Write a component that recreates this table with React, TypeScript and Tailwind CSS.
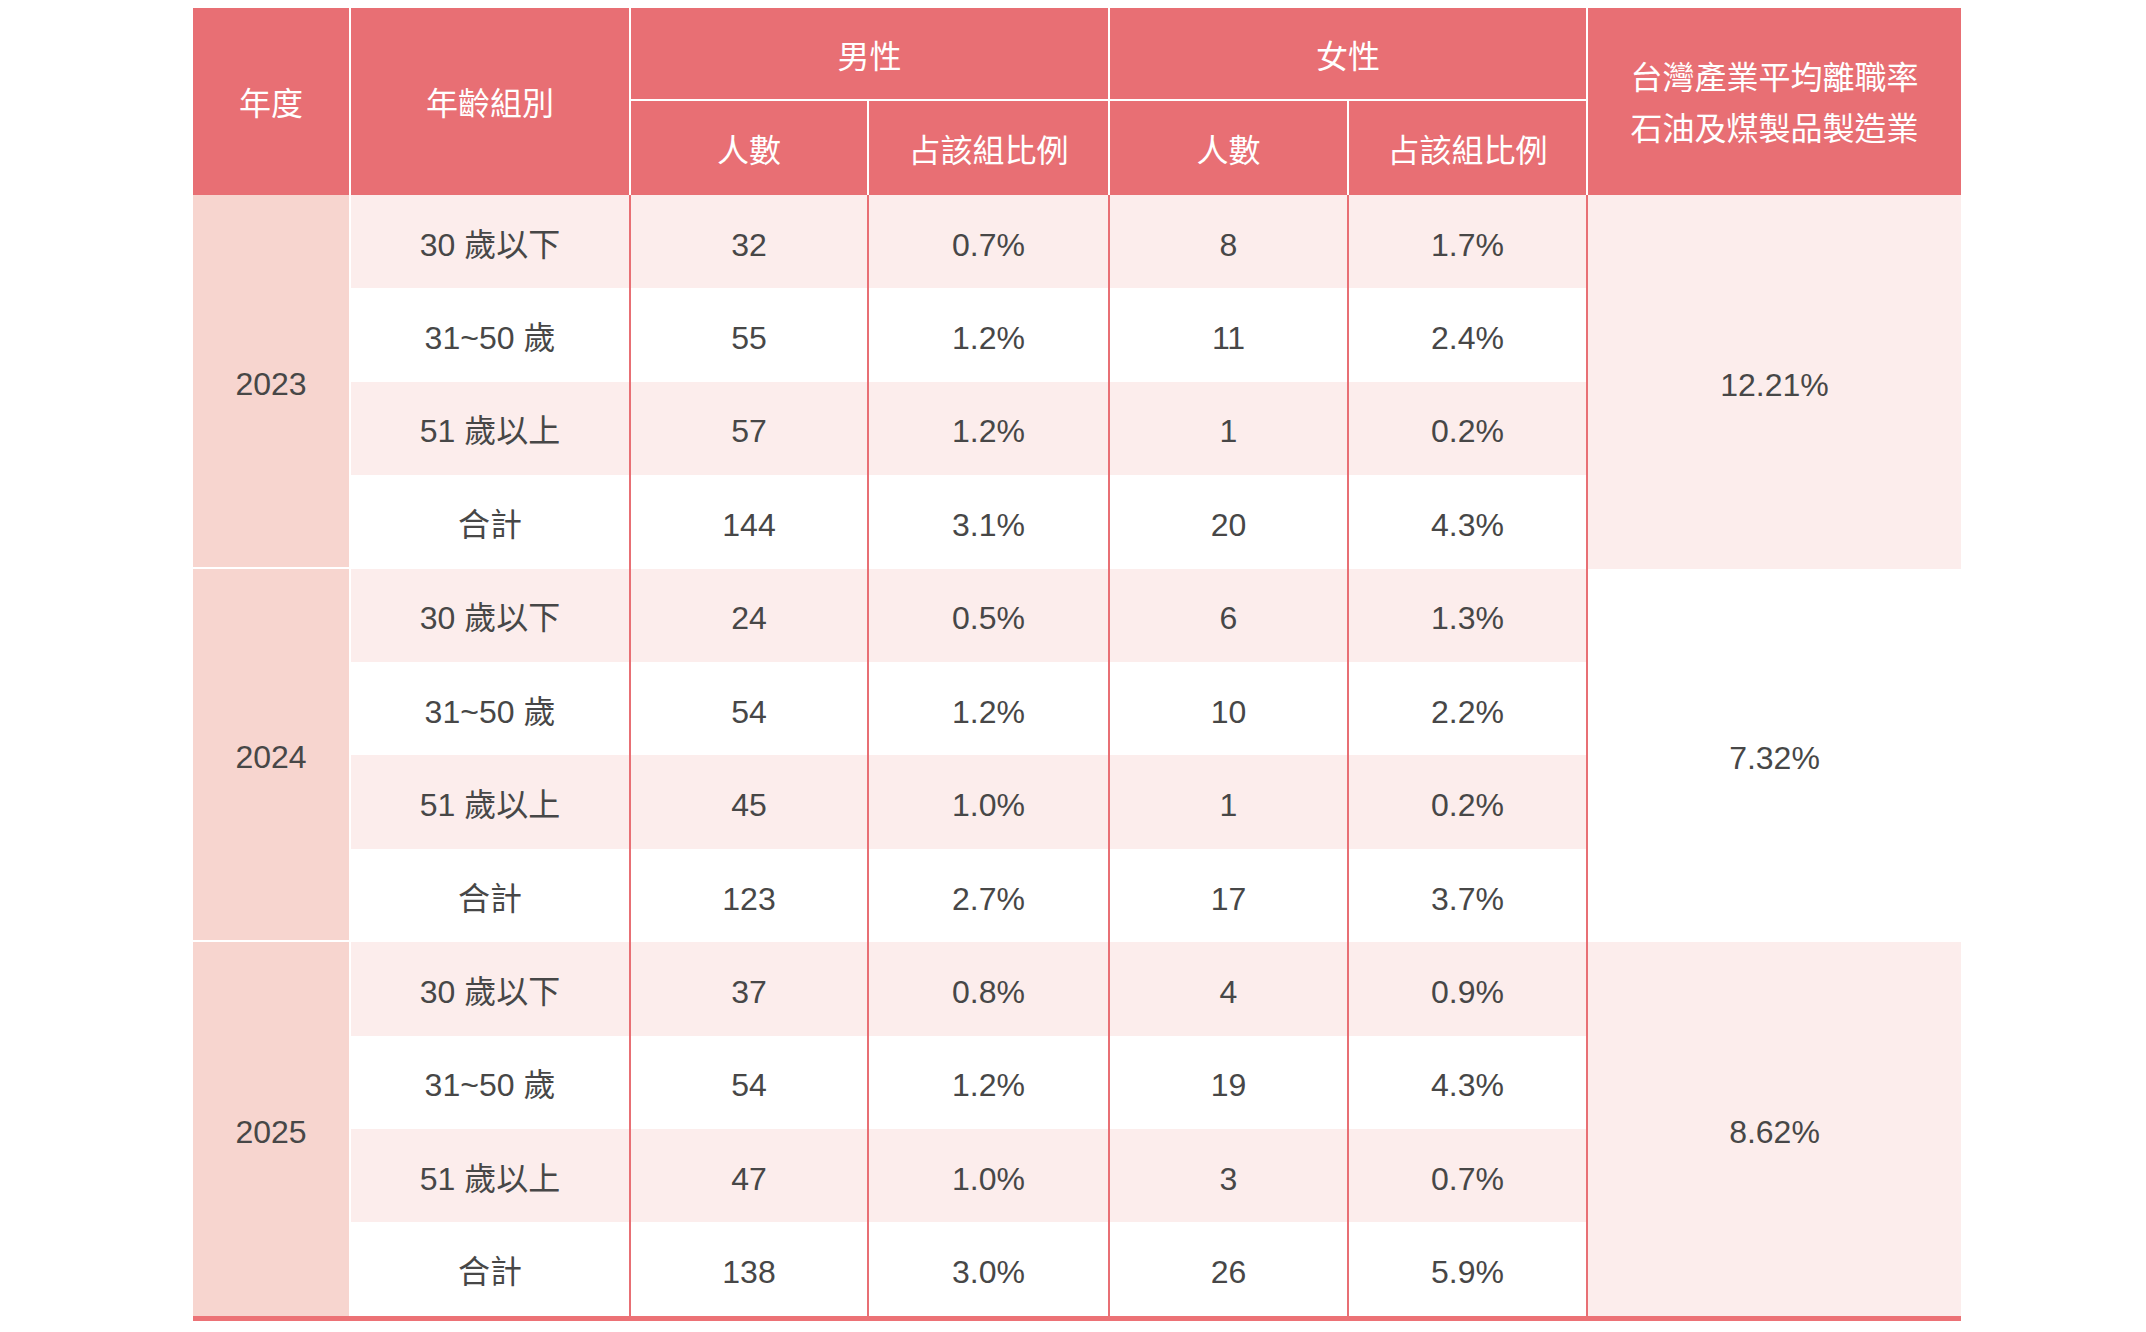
import type { ReactNode } from 'react'

interface AgeRow {
  group: string
  maleCount: string
  maleRatio: string
  femaleCount: string
  femaleRatio: string
}

interface YearBlock {
  year: string
  rate: string
  rows: AgeRow[]
}

const data: YearBlock[] = [
  {
    year: '2023',
    rate: '12.21%',
    rows: [
      { group: '30 歲以下', maleCount: '32', maleRatio: '0.7%', femaleCount: '8', femaleRatio: '1.7%' },
      { group: '31~50 歲', maleCount: '55', maleRatio: '1.2%', femaleCount: '11', femaleRatio: '2.4%' },
      { group: '51 歲以上', maleCount: '57', maleRatio: '1.2%', femaleCount: '1', femaleRatio: '0.2%' },
      { group: '合計', maleCount: '144', maleRatio: '3.1%', femaleCount: '20', femaleRatio: '4.3%' },
    ],
  },
  {
    year: '2024',
    rate: '7.32%',
    rows: [
      { group: '30 歲以下', maleCount: '24', maleRatio: '0.5%', femaleCount: '6', femaleRatio: '1.3%' },
      { group: '31~50 歲', maleCount: '54', maleRatio: '1.2%', femaleCount: '10', femaleRatio: '2.2%' },
      { group: '51 歲以上', maleCount: '45', maleRatio: '1.0%', femaleCount: '1', femaleRatio: '0.2%' },
      { group: '合計', maleCount: '123', maleRatio: '2.7%', femaleCount: '17', femaleRatio: '3.7%' },
    ],
  },
  {
    year: '2025',
    rate: '8.62%',
    rows: [
      { group: '30 歲以下', maleCount: '37', maleRatio: '0.8%', femaleCount: '4', femaleRatio: '0.9%' },
      { group: '31~50 歲', maleCount: '54', maleRatio: '1.2%', femaleCount: '19', femaleRatio: '4.3%' },
      { group: '51 歲以上', maleCount: '47', maleRatio: '1.0%', femaleCount: '3', femaleRatio: '0.7%' },
      { group: '合計', maleCount: '138', maleRatio: '3.0%', femaleCount: '26', femaleRatio: '5.9%' },
    ],
  },
]

function Head({ className = '', children }: { className?: string; children: ReactNode }) {
  return (
    <div className={`flex items-center justify-center bg-[#e86f74] pt-[6px] text-center text-white ${className}`}>
      {children}
    </div>
  )
}

function Cell({ shade, children }: { shade: boolean; children: ReactNode }) {
  return (
    <div
      className={`flex items-center justify-center border-r-2 border-[#e86f74] pt-[6px] ${shade ? 'bg-[#fcedec]' : 'bg-white'}`}
    >
      {children}
    </div>
  )
}

export default function App() {
  return (
    <div className="min-h-screen bg-white pt-[8px] pl-[193px]">
      <div
        className="w-[1768px] text-[32px] leading-none text-[#474747]"
        style={{ fontFamily: '"Liberation Sans", "Noto Sans CJK TC", sans-serif' }}
      >
        <div className="grid grid-cols-[158px_280px_238px_241px_239px_239px_373px] grid-rows-[repeat(14,93.43px)]">
          <Head className="row-span-2 border-r-2 border-white">年度</Head>
          <Head className="row-span-2 border-r-2 border-white">年齡組別</Head>
          <Head className="col-span-2 border-r-2 border-b-2 border-white">男性</Head>
          <Head className="col-span-2 border-r-2 border-b-2 border-white">女性</Head>
          <Head className="row-span-2 flex-col leading-[51px]">
            <span>台灣產業平均離職率</span>
            <span>石油及煤製品製造業</span>
          </Head>
          <Head className="border-r-2 border-white">人數</Head>
          <Head className="border-r-2 border-white">占該組比例</Head>
          <Head className="border-r-2 border-white">人數</Head>
          <Head className="border-r-2 border-white">占該組比例</Head>

          {data.map((block, bi) => (
            <YearRows key={block.year} block={block} last={bi === data.length - 1} shadeRate={bi !== 1} />
          ))}
        </div>
        <div className="h-[5px] bg-[#ec7276]" />
      </div>
    </div>
  )
}

function YearRows({ block, last, shadeRate }: { block: YearBlock; last: boolean; shadeRate: boolean }) {
  return (
    <>
      {block.rows.map((row, ri) => {
        const shade = ri % 2 === 0
        return (
          <div key={row.group} className="contents">
            {ri === 0 && (
              <div
                className={`row-span-4 flex items-center justify-center border-r-2 border-white bg-[#f7d5cf] pt-[6px] ${last ? '' : 'border-b-2'}`}
              >
                {block.year}
              </div>
            )}
            <Cell shade={shade}>{row.group}</Cell>
            <Cell shade={shade}>{row.maleCount}</Cell>
            <Cell shade={shade}>{row.maleRatio}</Cell>
            <Cell shade={shade}>{row.femaleCount}</Cell>
            <Cell shade={shade}>{row.femaleRatio}</Cell>
            {ri === 0 && (
              <div
                className={`row-span-4 flex items-center justify-center pt-[6px] ${shadeRate ? 'bg-[#fcedec]' : 'bg-white'}`}
              >
                {block.rate}
              </div>
            )}
          </div>
        )
      })}
    </>
  )
}
